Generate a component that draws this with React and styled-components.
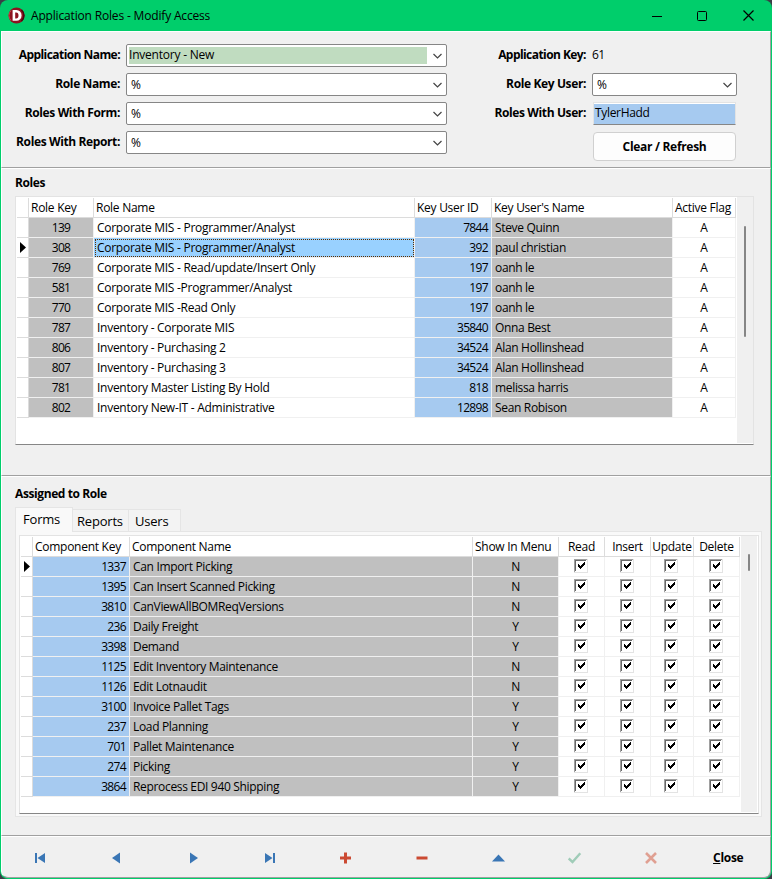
import React from "react";
import styled, { createGlobalStyle, css } from "styled-components";

const GlobalStyle = createGlobalStyle`
  * { box-sizing: border-box; }
  body {
    margin: 0;
    background: #3b3f47;
    font-family: "Open Sans", "Noto Sans", sans-serif;
    font-size: 12px;
    line-height: 16px;
    letter-spacing: -0.33px;
    color: #000;
  }
`;

const Window = styled.div`
  width: 772px;
  height: 879px;
  display: flex;
  flex-direction: column;
  background: #00ce6b;
  border-radius: 8px;
  padding: 0 1px 1px;
  overflow: hidden;
`;

const TitleBar = styled.header`
  height: 31px;
  flex: none;
  display: flex;
  align-items: center;
  padding-left: 7px;
`;

const Title = styled.h1`
  margin: 0 auto 0 6px;
  font-size: 12px;
  font-weight: 400;
  letter-spacing: -0.17px;
`;

const CaptionButton = styled.div`
  width: 46px;
  height: 31px;
  display: grid;
  place-items: center;
`;

const Panel = styled.section`
  flex: none;
  height: ${(p) => p.$h}px;
  background: #f0f0f0;
  border: 1px solid #fff;
  border-right-color: #a0a0a0;
  border-bottom-color: #a0a0a0;
  ${(p) => p.$last && css`border-radius: 0 0 7px 7px;`}
`;

const FilterPanel = styled(Panel)`
  display: grid;
  grid-template-columns: 445px 290px;
  justify-content: start;
  padding-top: 12px;
`;

const Column = styled.div`
  display: flex;
  flex-direction: column;
`;

const Field = styled.div`
  height: 29px;
  display: grid;
  grid-template-columns: ${(p) => p.$label}px ${(p) => p.$w}px;
  column-gap: 6px;
  align-items: start;
`;

const Label = styled.label`
  font-weight: 700;
  letter-spacing: ${(p) => (p.$tight ? -0.56 : -0.38)}px;
  text-align: right;
  padding-top: 3px;
  white-space: nowrap;
`;

const Select = styled.div`
  height: 23px;
  display: flex;
  align-items: center;
  justify-content: space-between;
  background: #fff;
  border: 1px solid #868686;
  border-radius: 2px;
  padding: 0 4px 0 ${(p) => (p.$filled ? 2 : 4)}px;
`;

const Highlight = styled.span`
  width: 298px;
  height: 17px;
  line-height: 15px;
  letter-spacing: -0.22px;
  background: #c0dcc0;
`;

const KeyValue = styled.span`
  padding-top: 3px;
  letter-spacing: -0.6px;
`;

const UserInput = styled.div`
  height: 23px;
  margin: 0 1px;
  padding: 1px 0 1px 0;
  background: #fff;
  border: 1px solid #e3e3e3;
  border-bottom: 1px solid #868686;
`;

const UserValue = styled.div`
  height: 20px;
  padding-left: 1px;
  line-height: 18px;
  background: #a6caf0;
`;

const ClearButton = styled.button`
  width: 143px;
  height: 29px;
  margin: 1px 0 0 1px;
  grid-column: 2;
  padding: 1px 0 0;
  border: 1px solid #d0d0d0;
  border-radius: 4px;
  background: #fdfdfd;
  color: #000;
  font: inherit;
  font-weight: 700;
  letter-spacing: -0.3px;
`;

const SectionTitle = styled.h2`
  margin: 0;
  font-size: 12px;
  line-height: 16px;
  font-weight: 700;
  letter-spacing: -0.4px;
`;

const RolesPanel = styled(Panel)`
  padding: 6px 0 0 13px;
`;

const AssignedPanel = styled(Panel)`
  padding: 9px 0 0 13px;
`;

const GridFrame = styled.div`
  width: ${(p) => p.$w}px;
  height: ${(p) => p.$h}px;
  display: flex;
  justify-content: space-between;
  background: #fff;
  border: 1px solid #e3e3e3;
  border-bottom-color: #868686;
  padding: 0 1px 1px 0;
`;

const Rows = styled.div`
  padding: ${(p) => p.$top}px 0 0 ${(p) => p.$left}px;
`;

const Row = styled.div`
  display: grid;
  grid-template-columns: ${(p) => p.$cols};
  height: 20px;
`;

const fills = { grey: "#c0c0c0", blue: "#a6caf0", white: "#fff", selected: "#99d1ff" };
const aligns = { left: "flex-start", right: "flex-end", center: "center" };

const Cell = styled.div`
  display: flex;
  align-items: center;
  justify-content: ${(p) => aligns[p.$align || "left"]};
  padding: ${(p) => (p.$align === "center" ? "0" : "0 2px 0 3px")};
  border-right: 1px solid #f0f0f0;
  border-bottom: 1px solid #f0f0f0;
  background: ${(p) => fills[p.$fill || "white"]};
  white-space: nowrap;
  ${(p) => p.$fill === "selected" && css`
    outline: 1px dotted #5c2e00;
    outline-offset: -2px;
  `}
`;

const NumberCell = styled(Cell)`
  letter-spacing: -0.65px;
  ${(p) => p.$align === "right" && css`padding-right: 3px;`}
`;

const NameCell = styled(Cell)`
  letter-spacing: -0.27px;
`;

const HeadCell = styled(Cell)`
  padding: ${(p) => (p.$align === "center" ? "0" : "0 2px")};
  border-color: #dcdcdc;
  letter-spacing: -0.27px;
`;

const Marker = styled(Cell)`
  padding: 0 0 0 3px;
  border-color: #dcdcdc;
`;

const CheckCell = styled(Cell)`
  align-items: flex-start;
  justify-content: flex-start;
  padding: 2px 0 0 ${(p) => p.$left}px;
`;

const ScrollTrack = styled.div`
  width: ${(p) => p.$w}px;
  background: #f0f0f0;
  padding: ${(p) => p.$top}px 0 0 7px;
`;

const ScrollThumb = styled.div`
  width: 2px;
  height: ${(p) => p.$h}px;
  border-radius: 1px;
  background: #868686;
`;

const Tabs = styled.nav`
  display: flex;
  align-items: flex-end;
  height: 24px;
  margin-top: 5px;
  font-size: 13px;
  letter-spacing: -0.2px;
`;

const Tab = styled.div`
  width: ${(p) => p.$w}px;
  height: ${(p) => (p.$active ? 25 : 22)}px;
  padding-left: ${(p) => p.$pad}px;
  line-height: ${(p) => (p.$active ? 22 : 23)}px;
  border: 1px solid #e5e5e5;
  border-left-width: ${(p) => (p.$active ? 1 : 0)}px;
  border-bottom: none;
  background: ${(p) => (p.$active ? "#f9f9f9" : "#f3f3f3")};
  margin-bottom: ${(p) => (p.$active ? -1 : 0)}px;
`;

const TabPage = styled.div`
  width: 747px;
  height: 286px;
  padding: 3px 0 0 3px;
  background: #f9f9f9;
  border: 1px solid #e5e5e5;
`;

const Navigator = styled(Panel)`
  display: grid;
  grid-template-columns: repeat(10, 76.4px);
  align-items: center;
  justify-items: center;
  padding-top: 1px;
`;

const CloseButton = styled.button`
  border: 0;
  padding: 0 0 0 1px;
  background: none;
  color: #000;
  font: inherit;
  font-weight: 700;
  letter-spacing: -0.3px;
`;

const Logo = () => (
  <svg width="17" height="17" viewBox="0 0 17 17">
    <circle cx="8.5" cy="8.5" r="8" fill="#8d1320" />
    <path d="M3 3.5 A7.3 7.3 0 0 0 3 13.5" fill="none" stroke="#d0404a" strokeWidth="1" />
    <path d="M13.5 3 A7.4 7.4 0 0 1 13.5 14" fill="none" stroke="#480810" strokeWidth="1.5" />
    <path d="M4.6 3h3.8a5.2 5.4 0 0 1 0 10.8H4.6z M7.2 5.4v6h.9a2.4 3 0 0 0 0-6z" fill="#fff" fillRule="evenodd" />
  </svg>
);

const Chevron = () => (
  <svg width="9" height="6" viewBox="0 0 9 6">
    <path d="M.5 1 4.5 5 8.5 1" fill="none" stroke="#444" strokeWidth="1.2" />
  </svg>
);

const Pointer = () => (
  <svg width="6" height="11" viewBox="0 0 6 11">
    <path d="M0 0 6 5.5 0 11z" />
  </svg>
);

const Check = () => (
  <svg width="14" height="14" viewBox="0 0 14 14" shapeRendering="crispEdges">
    <path fill="#fff" d="M0 0h14v14H0z" />
    <path fill="#e3e3e3" d="M13 0h1v14H0v-1h13z" />
    <path fill="#a0a0a0" d="M0 0h13v1H1v12H0z" />
    <path fill="#696969" d="M1 1h11v1H2v10H1z" />
    <path d="M4 5h1v1h1v1h1v-1h1v-1h1v-1h1v-1h1v3h-1v1h-1v1h-1v1h-1v1h-1v-1h-1v-1h-1z" />
  </svg>
);

const NavIcon = ({ d, color }) => (
  <svg width="14" height="12" viewBox="0 0 14 12">
    <path d={d} fill={color} />
  </svg>
);

const Stroked = ({ d, color, w }) => (
  <svg width="14" height="12" viewBox="0 0 14 12">
    <path d={d} fill="none" stroke={color} strokeWidth={w} />
  </svg>
);

const roles = [
  [139, "Corporate MIS - Programmer/Analyst", 7844, "Steve Quinn"],
  [308, "Corporate MIS - Programmer/Analyst", 392, "paul christian"],
  [769, "Corporate MIS - Read/update/Insert Only", 197, "oanh le"],
  [581, "Corporate MIS -Programmer/Analyst", 197, "oanh le"],
  [770, "Corporate MIS -Read Only", 197, "oanh le"],
  [787, "Inventory - Corporate MIS", 35840, "Onna Best"],
  [806, "Inventory - Purchasing 2", 34524, "Alan Hollinshead"],
  [807, "Inventory - Purchasing 3", 34524, "Alan Hollinshead"],
  [781, "Inventory Master Listing By Hold", 818, "melissa harris"],
  [802, "Inventory New-IT - Administrative", 12898, "Sean Robison"],
];

const components = [
  [1337, "Can Import Picking", "N"],
  [1395, "Can Insert Scanned Picking", "N"],
  [3810, "CanViewAllBOMReqVersions", "N"],
  [236, "Daily Freight", "Y"],
  [3398, "Demand", "Y"],
  [1125, "Edit Inventory Maintenance", "N"],
  [1126, "Edit Lotnaudit", "N"],
  [3100, "Invoice Pallet Tags", "Y"],
  [237, "Load Planning", "Y"],
  [701, "Pallet Maintenance", "Y"],
  [274, "Picking", "Y"],
  [3864, "Reprocess EDI 940 Shipping", "Y"],
];

const roleCols = "12px 65px 321px 77px 181px 63px";
const componentCols = "12px 97px 343px 86px 46px 46px 43px 46px";
const checkInsets = [15, 15, 13, 15];

const BLUE = "#3a76b5";
const RED = "#cb4a32";

export default function App() {
  return (
    <>
      <GlobalStyle />
      <Window>
        <TitleBar>
          <Logo />
          <Title>Application Roles - Modify Access</Title>
          <CaptionButton>
            <svg width="12" height="10"><path d="M2 5.5h10" stroke="#000" /></svg>
          </CaptionButton>
          <CaptionButton>
            <svg width="10" height="10"><rect x=".5" y=".5" width="9" height="9" rx="1" fill="none" stroke="#000" /></svg>
          </CaptionButton>
          <CaptionButton>
            <svg width="11" height="11"><path d="M.5.5l10 10M10.5.5l-10 10" stroke="#000" strokeWidth="1.2" /></svg>
          </CaptionButton>
        </TitleBar>

        <FilterPanel $h={137}>
          <Column>
            <Field $label={118} $w={321}>
              <Label $tight>Application Name:</Label>
              <Select $filled><Highlight>Inventory - New</Highlight><Chevron /></Select>
            </Field>
            {["Role Name:", "Roles With Form:", "Roles With Report:"].map((label) => (
              <Field key={label} $label={118} $w={321}>
                <Label>{label}</Label>
                <Select>%<Chevron /></Select>
              </Field>
            ))}
          </Column>
          <Column>
            <Field $label={139} $w={145}>
              <Label $tight>Application Key:</Label>
              <KeyValue>61</KeyValue>
            </Field>
            <Field $label={139} $w={145}>
              <Label>Role Key User:</Label>
              <Select>%<Chevron /></Select>
            </Field>
            <Field $label={139} $w={145}>
              <Label>Roles With User:</Label>
              <UserInput><UserValue>TylerHadd</UserValue></UserInput>
            </Field>
            <Field $label={139} $w={145}>
              <ClearButton>Clear / Refresh</ClearButton>
            </Field>
          </Column>
        </FilterPanel>

        <RolesPanel $h={308}>
          <SectionTitle>Roles</SectionTitle>
          <RolesGrid />
        </RolesPanel>

        <AssignedPanel $h={360}>
          <SectionTitle>Assigned to Role</SectionTitle>
          <Tabs>
            <Tab $active $w={58} $pad={7}>Forms</Tab>
            <Tab $w={56} $pad={4}>Reports</Tab>
            <Tab $w={52} $pad={6}>Users</Tab>
          </Tabs>
          <TabPage><ComponentsGrid /></TabPage>
        </AssignedPanel>

        <Navigator $h={42} $last>
          <NavIcon color={BLUE} d="M2 1h2v10H2zM12 1v10L4.5 6z" />
          <NavIcon color={BLUE} d="M10 .5v11L2 6z" />
          <NavIcon color={BLUE} d="M4 .5v11l8-5.5z" />
          <NavIcon color={BLUE} d="M3 1v10l7.5-5zM11 1h2v10h-2z" />
          <NavIcon color={RED} d="M5 .5h3v4h4v3h-4v4h-3v-4h-4v-3h4z" />
          <NavIcon color={RED} d="M1.5 4.5h11v3h-11z" />
          <NavIcon color={BLUE} d="M0 9.5h13L6.5 2.5z" />
          <Stroked color="#a0ccb8" w={2.4} d="M.7 6.5 4.5 10 12.3 1.2" />
          <Stroked color="#e0a092" w={2.6} d="M2 1l10 10M12 1 2 11" />
          <CloseButton><u>C</u>lose</CloseButton>
        </Navigator>
      </Window>
    </>
  );
}

const RolesFrame = styled(GridFrame)`
  margin-top: 5px;
  padding-right: 0;
`;

function RolesGrid() {
  return (
    <RolesFrame $w={739} $h={249}>
      <Rows $top={1} $left={1}>
        <Row $cols={roleCols}>
          <HeadCell />
          <HeadCell>Role Key</HeadCell>
          <HeadCell>Role Name</HeadCell>
          <HeadCell>Key User ID</HeadCell>
          <HeadCell>Key User's Name</HeadCell>
          <HeadCell>Active Flag</HeadCell>
        </Row>
        {roles.map(([key, name, userId, user], i) => (
          <Row key={key} $cols={roleCols}>
            <Marker>{i === 1 && <Pointer />}</Marker>
            <NumberCell $fill="grey" $align="center">{key}</NumberCell>
            <NameCell $fill={i === 1 ? "selected" : "white"}>{name}</NameCell>
            <NumberCell $fill="blue" $align="right">{userId}</NumberCell>
            <Cell $fill="grey">{user}</Cell>
            <Cell $align="center">A</Cell>
          </Row>
        ))}
      </Rows>
      <ScrollTrack $w={16} $top={29}><ScrollThumb $h={111} /></ScrollTrack>
    </RolesFrame>
  );
}

function ComponentsGrid() {
  return (
    <GridFrame $w={740} $h={279}>
      <Rows $top={1} $left={1}>
        <Row $cols={componentCols}>
          <HeadCell />
          <HeadCell>Component Key</HeadCell>
          <HeadCell>Component Name</HeadCell>
          <HeadCell>Show In Menu</HeadCell>
          <HeadCell $align="center">Read</HeadCell>
          <HeadCell $align="center">Insert</HeadCell>
          <HeadCell $align="center">Update</HeadCell>
          <HeadCell $align="center">Delete</HeadCell>
        </Row>
        {components.map(([key, name, menu], i) => (
          <Row key={key} $cols={componentCols}>
            <Marker>{i === 0 && <Pointer />}</Marker>
            <NumberCell $fill="blue" $align="right">{key}</NumberCell>
            <Cell $fill="grey">{name}</Cell>
            <Cell $fill="grey" $align="center">{menu}</Cell>
            {checkInsets.map((inset, n) => (
              <CheckCell key={n} $left={inset}><Check /></CheckCell>
            ))}
          </Row>
        ))}
      </Rows>
      <ScrollTrack $w={16} $top={18}><ScrollThumb $h={17} /></ScrollTrack>
    </GridFrame>
  );
}
